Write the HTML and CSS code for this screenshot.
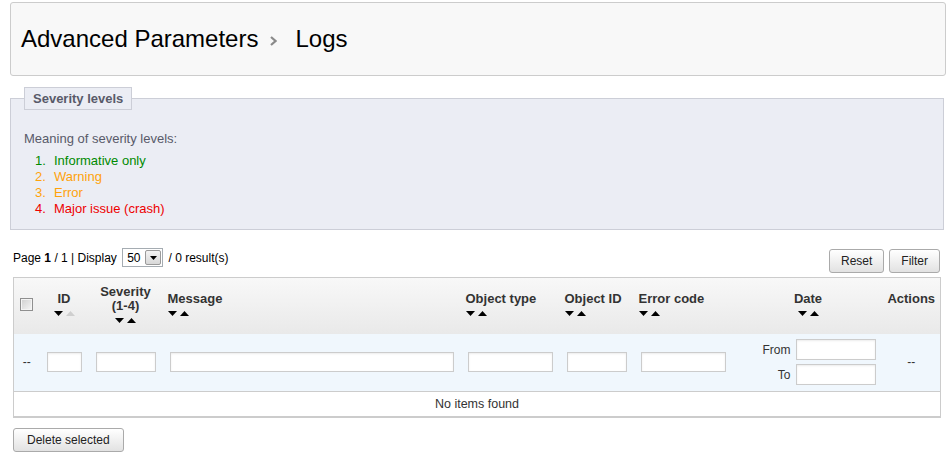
FILE: index.html
```html
<!DOCTYPE html>
<html lang="en">
<head>
<meta charset="utf-8">
<title>Logs</title>
<link rel="stylesheet" href="styles.css">
</head>
<body>
<div class="page">
  <div class="page-head">
    <h1 class="title">Advanced Parameters<svg class="crumb-sep" width="7" height="10" viewBox="0 0 7 10"><path d="M1 1 L5.5 5 L1 9" fill="none" stroke="#8a8a8a" stroke-width="2.2"/></svg>Logs</h1>
  </div>

  <fieldset class="severity">
    <legend class="severity-legend">Severity levels</legend>
    <p class="severity-intro">Meaning of severity levels:</p>
    <ol class="severity-list">
      <li class="sev sev-1">Informative only</li>
      <li class="sev sev-2">Warning</li>
      <li class="sev sev-3">Error</li>
      <li class="sev sev-4">Major issue (crash)</li>
    </ol>
  </fieldset>

  <div class="list-toolbar">
    <div class="pagination">Page <b>1</b> / 1 | Display <span class="fake-select"><span class="fake-select-value">50</span><span class="fake-select-btn"><svg width="7" height="4" viewBox="0 0 7 4"><path d="M0 0h7L3.5 4z" fill="#000"/></svg></span></span> / 0 result(s)</div>
    <div class="toolbar-actions">
      <button class="btn">Reset</button>
      <button class="btn">Filter</button>
    </div>
  </div>

  <table class="log-table">
    <colgroup>
      <col class="c-chk"><col class="c-id"><col class="c-sev"><col class="c-msg"><col class="c-ot"><col class="c-oid"><col class="c-ec"><col class="c-date"><col class="c-act">
    </colgroup>
    <thead>
      <tr class="head-row">
        <th class="center"><span class="checkbox"></span></th>
        <th class="center"><span class="th-label">ID</span><svg class="sort" width="21" height="5" viewBox="0 0 21 5"><path d="M0 0h9L4.5 5z" fill="#000"/><path d="M12 5h9L16.5 0z" fill="#cfcfcf"/></svg></th>
        <th class="center"><span class="th-label">Severity<br>(1-4)</span><svg class="sort" width="21" height="5" viewBox="0 0 21 5"><path d="M0 0h9L4.5 5z" fill="#000"/><path d="M12 5h9L16.5 0z" fill="#000"/></svg></th>
        <th><span class="th-label">Message</span><svg class="sort" width="21" height="5" viewBox="0 0 21 5"><path d="M0 0h9L4.5 5z" fill="#000"/><path d="M12 5h9L16.5 0z" fill="#000"/></svg></th>
        <th><span class="th-label">Object type</span><svg class="sort" width="21" height="5" viewBox="0 0 21 5"><path d="M0 0h9L4.5 5z" fill="#000"/><path d="M12 5h9L16.5 0z" fill="#000"/></svg></th>
        <th><span class="th-label">Object ID</span><svg class="sort" width="21" height="5" viewBox="0 0 21 5"><path d="M0 0h9L4.5 5z" fill="#000"/><path d="M12 5h9L16.5 0z" fill="#000"/></svg></th>
        <th><span class="th-label">Error code</span><svg class="sort" width="21" height="5" viewBox="0 0 21 5"><path d="M0 0h9L4.5 5z" fill="#000"/><path d="M12 5h9L16.5 0z" fill="#000"/></svg></th>
        <th class="center"><span class="th-label">Date</span><svg class="sort" width="21" height="5" viewBox="0 0 21 5"><path d="M0 0h9L4.5 5z" fill="#000"/><path d="M12 5h9L16.5 0z" fill="#000"/></svg></th>
        <th class="center"><span class="th-label no-sort">Actions</span></th>
      </tr>
      <tr class="filter-row">
        <td class="center">--</td>
        <td class="fcell"><input class="filter-input w-id" type="text"></td>
        <td class="fcell"><input class="filter-input w-sev" type="text"></td>
        <td class="fcell"><input class="filter-input w-msg" type="text"></td>
        <td class="fcell"><input class="filter-input w-ot" type="text"></td>
        <td class="fcell"><input class="filter-input w-oid" type="text"></td>
        <td class="fcell"><input class="filter-input w-ec" type="text"></td>
        <td class="fcell-date">
          <div class="date-range">
            <span class="date-label">From</span><input class="filter-input date-input" type="text">
            <span class="date-label">To</span><input class="filter-input date-input" type="text">
          </div>
        </td>
        <td class="center">--</td>
      </tr>
    </thead>
    <tbody>
      <tr class="empty-row"><td colspan="9">No items found</td></tr>
    </tbody>
  </table>

  <button class="btn btn-delete">Delete selected</button>
</div>
</body>
</html>
```
FILE: styles.css
```css
* { box-sizing: border-box; }

html, body {
  margin: 0;
  padding: 0;
  background: #fff;
}

body {
  font-family: "Liberation Sans", Arial, sans-serif;
  font-size: 12px;
  color: #000;
}

.page {
  padding: 2px 6px 0 10px;
}

/* ---- page head ---- */
.page-head {
  height: 74px;
  background: #f8f8f8;
  border: 1px solid #cccccc;
  border-radius: 3px;
  display: flex;
  align-items: center;
  padding-left: 10px;
}

.title {
  margin: 0;
  font-size: 24px;
  font-weight: normal;
  line-height: 28px;
  color: #000;
  display: flex;
  align-items: center;
}

.crumb-sep {
  margin: 3px 18px 0 12px;
}

/* ---- severity fieldset ---- */
.severity {
  margin: 11px 2px 0 0;
  padding: 21px 13px 12px 13px;
  background: #ebedf4;
  border: 1px solid #ccced7;
  color: #585a69;
  font-size: 13px;
  min-width: 0;
}

.severity-legend {
  padding: 0 8px;
  line-height: 21px;
  font-weight: bold;
  background: #ebedf4;
  border: 1px solid #ccced7;
  color: #585a69;
}

.severity-intro {
  margin: 0;
  line-height: 16px;
}

.severity-list {
  list-style: none;
  margin: 6px 0 0 0;
  padding: 0 0 0 11px;
  counter-reset: sev;
  line-height: 16px;
}

.sev {
  counter-increment: sev;
}

.sev::before {
  content: counter(sev) ".";
  display: inline-block;
  width: 19px;
}

.sev-1 { color: #008a00; }
.sev-2, .sev-3 { color: #ffa20a; }
.sev-4 { color: #ee0000; }

/* ---- toolbar ---- */
.list-toolbar {
  display: flex;
  justify-content: space-between;
  align-items: flex-start;
  margin: 19px 6px 4px 3px;
}

.pagination {
  display: flex;
  align-items: center;
  height: 19px;
  margin-top: -1px;
  white-space: pre;
}

.fake-select {
  display: inline-flex;
  align-items: center;
  width: 41px;
  height: 19px;
  margin: 0 2px 0 2px;
  border: 1px solid #a5acb2;
  background: #fff;
  padding-left: 4px;
}

.fake-select-value {
  flex: 1;
}

.fake-select-btn {
  width: 16px;
  height: 15px;
  margin-right: 1px;
  display: flex;
  align-items: center;
  justify-content: center;
  border: 1px solid #9a9a9a;
  border-radius: 2px;
  background: linear-gradient(#f4f4f4, #d8d8d8);
}

.toolbar-actions {
  display: flex;
  gap: 5px;
}

.btn {
  height: 24px;
  padding: 0 11px;
  font-family: "Liberation Sans", Arial, sans-serif;
  font-size: 12px;
  color: #222;
  background: linear-gradient(#ffffff, #e2e2e2);
  border: 1px solid #aaaaaa;
  border-radius: 3px;
  cursor: pointer;
}

/* ---- table ---- */
.log-table {
  margin-left: 3px;
  width: 927px;
  table-layout: fixed;
  border-collapse: collapse;
  border: 1px solid #cccccc;
  border-bottom: 2px solid #cccccc;
  color: #333;
}

.c-chk { width: 26px; }
.c-id { width: 49px; }
.c-sev { width: 74px; }
.c-msg { width: 298px; }
.c-ot { width: 99px; }
.c-oid { width: 74px; }
.c-ec { width: 100px; }
.c-date { width: 149px; }
.c-act { width: 58px; }

.head-row {
  height: 56px;
  background: linear-gradient(#f8f8f8, #e9e9e9);
}

.head-row th {
  padding: 0 0 4px 5px;
  text-align: left;
  vertical-align: middle;
  font-size: 13px;
  font-weight: bold;
  color: #333;
}

.head-row th.center {
  text-align: center;
  padding: 0 0 4px 0;
}

.filter-row td.center {
  text-align: center;
  padding: 0;
}

.th-label {
  display: block;
  line-height: 14px;
}

.th-label.no-sort {
  padding-bottom: 10px;
}

.sort {
  display: block;
  margin-top: 5px;
}

.center .sort {
  margin-left: auto;
  margin-right: auto;
}

.checkbox {
  display: inline-block;
  width: 13px;
  height: 13px;
  vertical-align: middle;
  border: 1px solid #8f8f8f;
  box-shadow: inset 0 0 0 1px #f4f4f4;
  background: linear-gradient(135deg, #cfcfcf, #f6f6f6);
  margin-top: -1px;
}

.filter-row {
  height: 58px;
  background: #f0f7fd;
  border-bottom: 1px solid #cccccc;
}

.filter-row td {
  vertical-align: middle;
  font-size: 12px;
  color: #333;
}

.fcell {
  padding: 0 0 0 7px;
}

.fcell-date {
  padding: 0 7px 0 0;
}

.filter-input {
  display: block;
  height: 20px;
  border: 1px solid #cccccc;
  background: #fff;
  box-shadow: inset 0 1px 2px rgba(0, 0, 0, 0.08);
  padding: 0 2px;
  font-family: "Liberation Sans", Arial, sans-serif;
  font-size: 12px;
  margin: 0;
}

.w-id { width: 35px; }
.w-sev { width: 60px; }
.w-msg { width: 284px; }
.w-ot { width: 85px; }
.w-oid { width: 60px; }
.w-ec { width: 85px; }

.date-range {
  display: grid;
  grid-template-columns: auto 80px;
  column-gap: 5px;
  row-gap: 4px;
  justify-content: end;
  align-items: center;
}

.date-label {
  text-align: right;
}

.date-input {
  width: 80px;
  height: 21px;
}

.empty-row td {
  height: 25px;
  padding: 0;
  text-align: center;
  vertical-align: middle;
  font-size: 12.5px;
  color: #333;
}

.btn-delete {
  margin: 10px 0 0 3px;
  padding: 0 13px;
}
```
